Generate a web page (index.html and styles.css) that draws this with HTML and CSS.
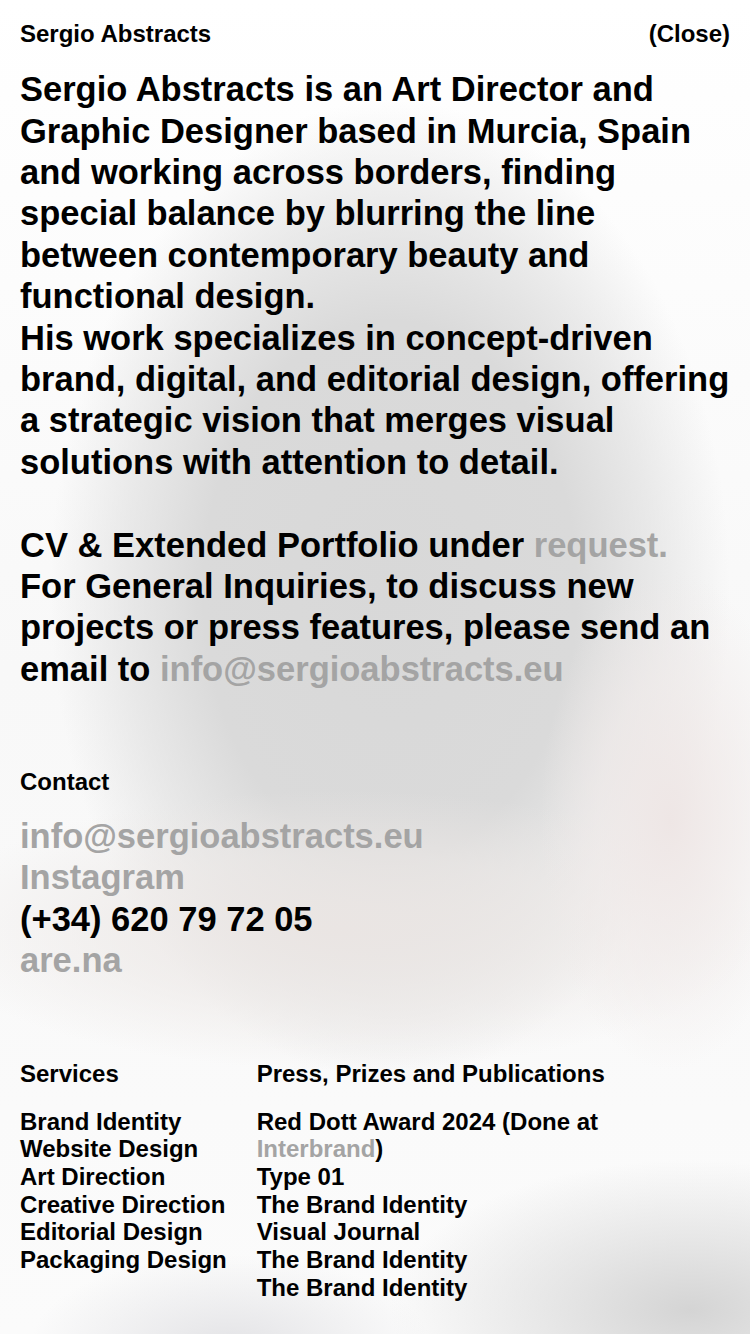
FILE: index.html
```html
<!DOCTYPE html>
<html lang="en">
<head>
<meta charset="utf-8">
<title>Sergio Abstracts — Info</title>
<link rel="stylesheet" href="styles.css">
</head>
<body>
<div class="page">
  <header class="top">
    <span class="brand">Sergio Abstracts</span>
    <a class="close" href="#">(Close)</a>
  </header>

  <p class="bio">Sergio Abstracts is an Art Director and Graphic Designer based in Murcia, Spain and working across borders, finding special balance by blurring the line between contemporary beauty and functional design.<br>His work specializes in concept-driven brand, digital, and editorial design, offering a strategic vision that merges visual solutions with attention to detail.<br><br>CV &amp; Extended Portfolio under <a class="muted" href="#">request.</a><br>For General Inquiries, to discuss new projects or press features, please send an email to <a class="muted" href="#">info@sergioabstracts.eu</a></p>

  <section class="contact">
    <h2 class="label">Contact</h2>
    <ul class="links">
      <li><a class="muted" href="#">info@sergioabstracts.eu</a></li>
      <li><a class="muted" href="#">Instagram</a></li>
      <li>(+34) 620 79 72 05</li>
      <li><a class="muted" href="#">are.na</a></li>
    </ul>
  </section>

  <section class="cols">
    <div class="col">
      <h2 class="label">Services</h2>
      <ul class="list">
        <li>Brand Identity</li>
        <li>Website Design</li>
        <li>Art Direction</li>
        <li>Creative Direction</li>
        <li>Editorial Design</li>
        <li>Packaging Design</li>
      </ul>
    </div>
    <div class="col">
      <h2 class="label">Press, Prizes and Publications</h2>
      <ul class="list">
        <li>Red Dott Award 2024 (Done at<br><a class="muted" href="#">Interbrand</a>)</li>
        <li>Type 01</li>
        <li>The Brand Identity</li>
        <li>Visual Journal</li>
        <li>The Brand Identity</li>
        <li>The Brand Identity</li>
      </ul>
    </div>
  </section>
</div>
</body>
</html>
```

FILE: styles.css
```css
html, body {
  margin: 0;
  padding: 0;
}

body {
  min-height: 1334px;
  font-family: "Liberation Sans", Arial, Helvetica, sans-serif;
  font-weight: 700;
  color: #000;
  background-color: #fbfbfb;
  background-image:
    radial-gradient(ellipse 300px 150px at 690px 1310px, rgba(212,212,212,1) 0%, rgba(216,216,216,0.6) 45%, rgba(220,220,220,0) 100%),
    radial-gradient(ellipse 200px 90px at 230px 1345px, rgba(225,225,228,0.9) 0%, rgba(230,230,232,0) 100%),
    radial-gradient(ellipse 130px 250px at 670px 820px, rgba(238,230,229,1) 0%, rgba(240,234,233,0.6) 55%, rgba(242,238,237,0) 100%),
    radial-gradient(ellipse 420px 140px at 340px 930px, rgba(234,229,227,1) 0%, rgba(236,232,230,0.6) 55%, rgba(240,238,237,0) 100%),
    radial-gradient(ellipse 340px 490px at 390px 590px, rgba(216,216,216,1) 0%, rgba(218,218,218,1) 55%, rgba(222,222,222,0.6) 78%, rgba(230,230,230,0) 100%),
    linear-gradient(to bottom, #ffffff 0, #f8f8f8 50%, #fbfbfb 100%);
  background-repeat: no-repeat;
}

.page {
  padding: 19.5px 20px 0;
  display: flex;
  flex-direction: column;
}

a {
  color: inherit;
  text-decoration: none;
}

.muted {
  color: #a4a4a4;
}

.top {
  display: flex;
  justify-content: space-between;
  align-items: baseline;
  font-size: 24px;
  line-height: 27.6px;
}

.bio {
  margin: 22px 0 0;
  font-size: 34.5px;
  line-height: 41.4px;
}

.contact {
  margin-top: 78px;
}

.label {
  margin: 0;
  font-size: 24px;
  line-height: 27.6px;
  font-weight: 700;
}

.links {
  list-style: none;
  margin: 20px 0 0;
  padding: 0;
  font-size: 34.5px;
  line-height: 41.4px;
}

.cols {
  margin-top: 79px;
  display: grid;
  grid-template-columns: 1fr 2fr;
}

.list {
  list-style: none;
  margin: 19.5px 0 0;
  padding: 0;
  font-size: 24px;
  line-height: 27.7px;
}
```
